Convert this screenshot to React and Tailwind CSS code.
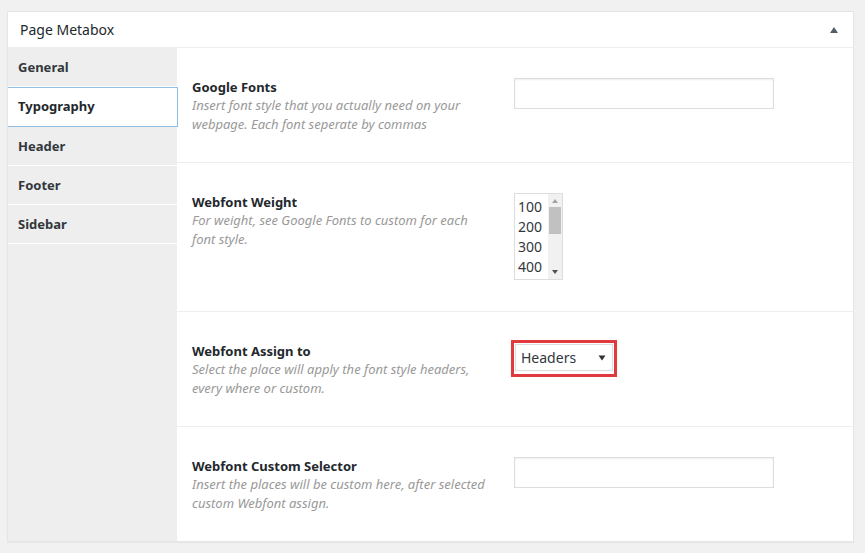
import React from "react";

const tabs = ["General", "Typography", "Header", "Footer", "Sidebar"];

const Label = ({ title, children }) => (
  <div className="w-[322px] shrink-0 pr-6">
    <div className="text-[13px] font-bold leading-[18px] text-[#23282d]">{title}</div>
    <div className="text-[13px] italic leading-[19px] text-[#999]">{children}</div>
  </div>
);

const TextField = () => (
  <div className="h-[31px] w-[260px] border border-[#ddd] bg-white shadow-[inset_0_1px_2px_rgba(0,0,0,0.07)]" />
);

export default function App() {
  return (
    <div
      className="min-h-[553px] w-[865px] bg-[#f1f1f1] pl-[7px] pt-[11px]"
      style={{ fontFamily: '"Noto Sans", "Open Sans", sans-serif' }}
    >
      <div className="w-[847px] border border-[#e5e5e5] bg-white shadow-[0_1px_1px_rgba(0,0,0,0.04)]">
        {/* header */}
        <div className="flex h-[36px] items-center justify-between border-b border-[#eee] pl-[12px] pr-[14px]">
          <span className="text-[14px] text-[#23282d]">Page Metabox</span>
          <svg width="10" height="8" viewBox="0 0 10 8">
            <path d="M1 7 L5 1 L9 7 Z" fill="#555d66" />
          </svg>
        </div>

        <div className="flex">
          {/* tabs */}
          <div className="w-[169px] shrink-0 bg-[#eee]">
            {tabs.map((t) =>
              t === "Typography" ? (
                <div
                  key={t}
                  className="relative z-10 mr-[-1px] flex h-[40px] items-center border border-l-0 border-[#8fbde3] bg-white pl-[10px] text-[13px] font-bold text-[#23282d]"
                >
                  {t}
                </div>
              ) : (
                <div
                  key={t}
                  className="flex h-[39px] items-center border-b border-white pl-[10px] pt-[1px] text-[13px] font-bold text-[#32373c]"
                >
                  {t}
                </div>
              )
            )}
          </div>

          {/* fields */}
          <div className="flex-1">
            <div className="flex border-b border-[#eee] pb-[28px] pl-[15px] pt-[30px]">
              <Label title="Google Fonts">
                Insert font style that you actually need on your webpage. Each font seperate by commas
              </Label>
              <TextField />
            </div>

            <div className="flex border-b border-[#eee] pb-[31px] pl-[15px] pt-[30px]">
              <Label title="Webfont Weight">
                For weight, see Google Fonts to custom for each font style.
              </Label>
              <div className="flex h-[87px] w-[49px] border border-[#ddd] bg-white">
                <div className="flex-1 pl-[3px] pt-[3px] text-[14px] leading-[20px] text-[#32373c]">
                  <div>100</div>
                  <div>200</div>
                  <div>300</div>
                  <div>400</div>
                </div>
                <div className="flex w-[14px] flex-col items-center bg-[#f1f1f1]">
                  <svg width="8" height="6" viewBox="0 0 8 6" className="mt-[4px]">
                    <path d="M1 5 L4 1 L7 5 Z" fill="#a3a3a3" />
                  </svg>
                  <div className="mt-[3px] h-[27px] w-[12px] bg-[#c1c1c1]" />
                  <div className="flex-1" />
                  <svg width="8" height="6" viewBox="0 0 8 6" className="mb-[4px]">
                    <path d="M1 1 L4 5 L7 1 Z" fill="#505050" />
                  </svg>
                </div>
              </div>
            </div>

            <div className="flex border-b border-[#eee] pb-[28px] pl-[15px] pt-[30px]">
              <Label title="Webfont Assign to">
                Select the place will apply the font style headers, every where or custom.
              </Label>
              <div className="-ml-[3px] -mt-[2px] h-[37px] border-[3px] border-[#e0393e] p-[1px]">
                <div className="flex h-[27px] w-[98px] items-center justify-between border border-[#ddd] bg-white pl-[5px] pr-[6px]">
                  <span className="text-[14px] text-[#32373c]">Headers</span>
                  <svg width="8" height="6" viewBox="0 0 8 6">
                    <path d="M0.5 0.5 L4 5.5 L7.5 0.5 Z" fill="#333" />
                  </svg>
                </div>
              </div>
            </div>

            <div className="flex pb-[28px] pl-[15px] pt-[30px]">
              <Label title="Webfont Custom Selector">
                Insert the places will be custom here, after selected custom Webfont assign.
              </Label>
              <TextField />
            </div>
          </div>
        </div>
      </div>
    </div>
  );
}
